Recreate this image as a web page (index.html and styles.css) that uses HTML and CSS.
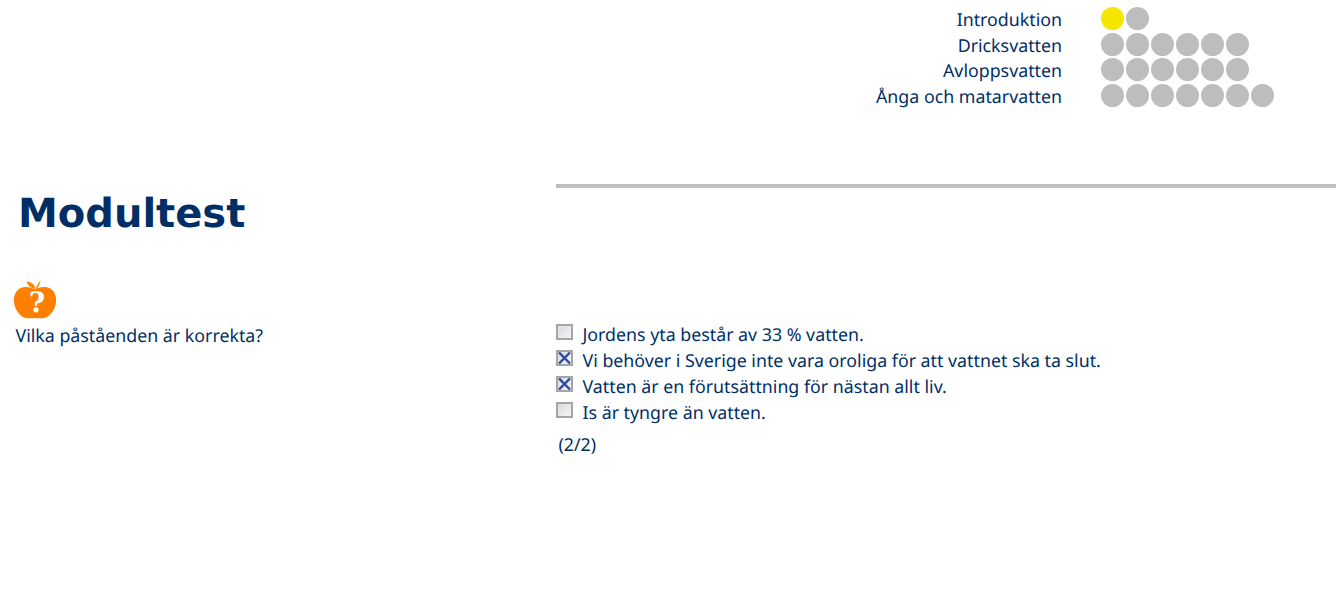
FILE: index.html
```html
<!DOCTYPE html>
<html lang="sv">
<head>
<meta charset="utf-8">
<title>Modultest</title>
<link rel="stylesheet" href="styles.css">
</head>
<body>
<nav class="progress">
  <div class="progress-row"><span class="progress-label">Introduktion</span><span class="dots"><i class="dot current"></i><i class="dot"></i></span></div>
  <div class="progress-row"><span class="progress-label">Dricksvatten</span><span class="dots"><i class="dot"></i><i class="dot"></i><i class="dot"></i><i class="dot"></i><i class="dot"></i><i class="dot"></i></span></div>
  <div class="progress-row"><span class="progress-label">Avloppsvatten</span><span class="dots"><i class="dot"></i><i class="dot"></i><i class="dot"></i><i class="dot"></i><i class="dot"></i><i class="dot"></i></span></div>
  <div class="progress-row"><span class="progress-label">Ånga och matarvatten</span><span class="dots"><i class="dot"></i><i class="dot"></i><i class="dot"></i><i class="dot"></i><i class="dot"></i><i class="dot"></i><i class="dot"></i></span></div>
</nav>
<div class="divider"></div>
<h1 class="title">Modultest</h1>
<main class="quiz">
  <section class="question">
    <svg class="apple" width="44" height="40" viewBox="0 0 44 40" aria-hidden="true">
      <path fill="#ff7f00" d="M22 10.500C26 7.500 34 7 38 10C42 13 43.500 18 43 23C42.500 30 38 36 33 38.500C30 39.500 26 39.500 22 39C18 39.500 14 39.500 11 38.500C6 36 1.500 30 1 23C.5 18 2 13 6 10C10 7 18 7.500 22 10.500Z"/>
      <path fill="#ff7f00" d="M22 10C18 9 15 7 13.500 2.500C18 3 22.500 5.500 22 10Z"/>
      <path fill="#ff7f00" d="M22.500 9.500L25.500 4L28 1L26.500 5L24 10Z"/>
      <text class="apple-mark" x="24" y="33" text-anchor="middle">?</text>
    </svg>
    <p class="question-text">Vilka påståenden är korrekta?</p>
  </section>
  <section class="answers">
    <div class="answer"><span class="box"></span><span>Jordens yta består av 33 % vatten.</span></div>
    <div class="answer"><span class="box"><svg class="cross" width="13" height="12" viewBox="0 0 13 12" aria-hidden="true"><path d="M1 .5L12 11.500M12 .5L1 11.500"/></svg></span><span>Vi behöver i Sverige inte vara oroliga för att vattnet ska ta slut.</span></div>
    <div class="answer"><span class="box"><svg class="cross" width="13" height="12" viewBox="0 0 13 12" aria-hidden="true"><path d="M1 .5L12 11.500M12 .5L1 11.500"/></svg></span><span>Vatten är en förutsättning för nästan allt liv.</span></div>
    <div class="answer"><span class="box"></span><span>Is är tyngre än vatten.</span></div>
    <p class="count">(2/2)</p>
  </section>
</main>
</body>
</html>
```
FILE: styles.css
```css
html, body {
  margin: 0;
  padding: 0;
  background: #fff;
}
body {
  font-family: "Noto Sans", sans-serif;
  font-size: 17.8px;
  color: #002f66;
  overflow: hidden;
  text-rendering: geometricPrecision;
}
.progress {
  padding-top: 7px;
  height: 177px;
  box-sizing: border-box;
}
.progress-row {
  display: grid;
  grid-template-columns: 1062px 1fr;
  column-gap: 39px;
  height: 25.67px;
  line-height: 26px;
}
.progress-label {
  text-align: right;
  white-space: nowrap;
}
.dots {
  display: flex;
  gap: 2px;
}
.dot {
  display: block;
  width: 23px;
  height: 23px;
  border-radius: 50%;
  background: #bdbdbd;
}
.dot.current {
  background: #f5e600;
}
.divider {
  margin-left: 556px;
  height: 4px;
  margin-top: 7px;
  background: #c0c0c0;
}
.title {
  margin: 0;
  padding: 0 0 0 18px;
  height: 91px;
  line-height: 52px;
  font-family: "DejaVu Sans", Verdana, sans-serif;
  font-size: 40px;
  font-weight: 700;
  color: #002f66;
}
.quiz {
  display: grid;
  grid-template-columns: 556px 1fr;
}
.question {
  padding-left: 13px;
}
.apple {
  display: block;
}
.question-text {
  margin: 0;
  padding-left: 2.500px;
  line-height: 26px;
  margin-top: 4px;
}
.answers {
  padding-top: 43px;
}
.answer {
  display: flex;
  align-items: flex-start;
  gap: 9.500px;
  height: 26px;
  line-height: 26px;
}
.box {
  flex: none;
  width: 17px;
  height: 16px;
  margin-top: 2px;
  box-sizing: border-box;
  border: 2px solid #a5a5a5;
  background: linear-gradient(135deg, #d9dbdf, #f4f4f6);
  display: flex;
  align-items: center;
  justify-content: center;
}
.cross {
  display: block;
  flex: none;
}
.cross path {
  stroke: #2f4b9c;
  stroke-width: 2.400;
  fill: none;
}
.apple-mark {
  font-family: "DejaVu Serif", serif;
  font-size: 28px;
  font-weight: 700;
  fill: #fff;
}
.count {
  margin: 6px 0 0 2.500px;
  line-height: 26px;
}
```
